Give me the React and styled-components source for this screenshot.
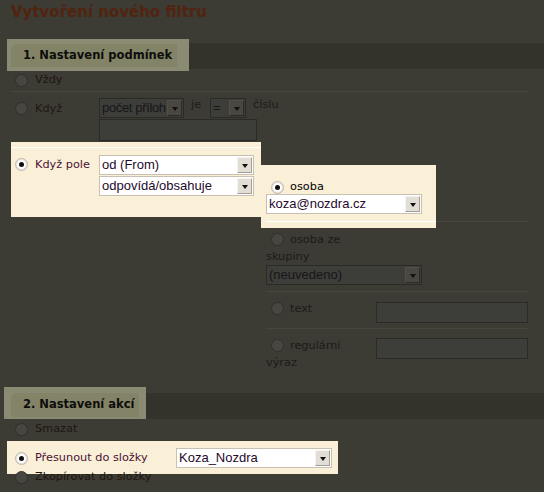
import React from 'react';
import styled, { createGlobalStyle, css } from 'styled-components';

const GlobalStyle = createGlobalStyle`
  html, body { margin: 0; padding: 0; }
  body { background: #3c3b34; overflow: hidden; }
  *, *::before, *::after { box-sizing: border-box; }
`;

const dimVars = css`
  --fg: #1c1b17;
  --label: #221511;
  --line: #47463d;
  --field-bg: #3d3d39;
  --field-border: #2b2a25;
  --field-fg: #18161a;
  --input-bg: #3d3e3a;
  --btn-bg: #4a4740;
  --btn-hi: #524f47;
  --btn-lo: #2c2b26;
  --radio-bg: #47463f;
  --radio-border: #31302a;
  --radio-shadow: none;
`;

const litVars = css`
  --fg: #000000;
  --label: #4b1036;
  --line: #ffffff;
  --field-bg: #ffffff;
  --field-border: #c8c0b2;
  --field-fg: #250a2c;
  --input-bg: #ffffff;
  --btn-bg: #e2ded6;
  --btn-hi: #f6f4f0;
  --btn-lo: #a29e96;
  --radio-bg: #ffffff;
  --radio-border: #bdb6ac;
  --radio-shadow: inset 0 0 0 1px #e6e1da;
`;

const halo = ({ $t = 0, $r = 0, $b = 0, $l = 0, $mt = 0, $mb = 0 }) => css`
  padding: ${$t}px ${$r}px ${$b}px ${$l}px;
  margin: ${$mt - $t}px ${-$r}px ${$mb - $b}px ${-$l}px;
`;

const Page = styled.div`
  ${dimVars}
  width: 544px;
  height: 492px;
  overflow: hidden;
  padding-left: 7px;
  background: #3c3b34;
  font-family: "DejaVu Sans", Verdana, sans-serif;
  font-size: 11.3px;
  line-height: 14px;
  color: var(--fg);
`;

const Spot = styled.div`
  ${litVars}
  background: #faf0d8;
  ${halo}
`;

const Title = styled.h1`
  margin: 0 0 0 4px;
  height: 43px;
  padding-top: 3px;
  font: bold 15px/18px "DejaVu Sans", Verdana, sans-serif;
  color: #52230f;
`;

const Band = styled.div`
  display: flex;
  align-items: flex-start;
  height: 26px;
  margin-top: ${p => p.$mt || 0}px;
  padding: ${p => p.$pt || 0}px 0 0 4px;
  background: #34332b;
`;

const TabHalo = styled.div`
  background: #8b8a73;
  ${halo}
`;

const Tab = styled.h2`
  margin: 0;
  height: ${p => p.$h}px;
  display: flex;
  align-items: center;
  padding: 0 5px 0 12px;
  background: #838367;
  clip-path: polygon(4px 0, 100% 0, 100% 100%, 0 100%, 0 4px);
  font: bold 11.5px/1 "DejaVu Sans", Verdana, sans-serif;
  color: #0d0d0a;
  white-space: nowrap;
`;

const Section = styled.div`
  margin-left: 4px;
  width: 518px;
`;

const OptionRow = styled.div`
  display: flex;
  align-items: ${p => p.$align || 'center'};
  height: ${p => (p.$h ? `${p.$h}px` : 'auto')};
  padding: ${p => p.$pt || 0}px 0 0 4px;
  ${p => p.$rule && css`border-bottom: 1px solid var(--line);`}
`;

const Radio = styled.span`
  flex: none;
  display: inline-block;
  position: relative;
  width: 13px;
  height: 13px;
  margin-top: ${p => p.$mt || 0}px;
  border-radius: 50%;
  border: 1px solid var(--radio-border);
  background: var(--radio-bg);
  box-shadow: var(--radio-shadow);
  ${p => p.$on && css`
    &::after {
      content: '';
      position: absolute;
      left: 3px;
      top: 3px;
      width: 5px;
      height: 5px;
      border-radius: 50%;
      background: #111;
    }
  `}
`;

const InlineRadio = styled(Radio)`
  vertical-align: middle;
  margin: -2px 6px 0 5px;
`;

const RowLabel = styled.span`
  flex: none;
  width: ${p => (p.$w ? `${p.$w}px` : 'auto')};
  margin: ${p => p.$mt || 0}px 0 0 7px;
  color: var(--label);
  white-space: nowrap;
`;

const Controls = styled.div`
  display: flex;
  flex-direction: column;
  gap: 1px;
`;

const ControlLine = styled.div`
  display: flex;
  align-items: flex-start;
`;

const Word = styled.span`
  margin: 0 ${p => p.$mr || 0}px 0 ${p => p.$ml || 0}px;
  color: var(--fg);
  white-space: nowrap;
`;

const SelectBox = styled.div`
  flex: none;
  display: flex;
  align-items: center;
  width: ${p => p.$w}px;
  height: 20px;
  padding: 1px 1px 1px 2px;
  border: 1px solid var(--field-border);
  background: var(--field-bg);
  color: var(--field-fg);
  font: 13px/16px "Liberation Sans", Arial, sans-serif;
  letter-spacing: ${p => (p.$tight ? '-0.35px' : 'normal')};
`;

const SelectValue = styled.span`
  flex: 1;
  min-width: 0;
  overflow: hidden;
  white-space: nowrap;
`;

const DropButton = styled.span`
  flex: none;
  width: 15px;
  height: 16px;
  display: flex;
  align-items: center;
  justify-content: center;
  background: var(--btn-bg);
  border: 1px solid;
  border-color: var(--btn-hi) var(--btn-lo) var(--btn-lo) var(--btn-hi);
  &::before {
    content: '';
    margin-top: 1px;
    border-style: solid;
    border-width: 4px 3.5px 0;
    border-color: #111 transparent transparent;
  }
`;

const Select = ({ w, tight, children }) => (
  <SelectBox $w={w} $tight={tight}>
    <SelectValue>{children}</SelectValue>
    <DropButton />
  </SelectBox>
);

const TextField = styled.input.attrs({ type: 'text', readOnly: true })`
  display: block;
  flex: none;
  width: ${p => p.$w}px;
  height: ${p => p.$h}px;
  margin: 0 0 0 ${p => p.$ml || 0}px;
  padding: 0;
  border: 1px solid var(--field-border);
  background: var(--input-bg);
  outline: none;
`;

const CondGrid = styled.div`
  display: grid;
  grid-template-columns: 250px 268px;
  align-items: start;
`;

const CondCell = styled.div`
  display: flex;
  align-items: flex-start;
  height: 65px;
  padding: 7px 0 0 4px;
  border-top: 1px solid var(--line);
`;

const Targets = styled.div`
  padding: 23px 0 0 5px;
`;

const TargetRow = styled.div`
  display: flex;
`;

const TargetCell = styled.div`
  width: 170px;
  padding: 10px 0 7px;
  border-bottom: 1px solid var(--line);
`;

const RuleFill = styled.div`
  flex: 1;
  border-bottom: 1px solid var(--line);
`;

const ChoiceLine = styled.div`
  display: flex;
  align-items: center;
  height: 14px;
  padding-left: 5px;
`;

const ChoiceName = styled.span`
  margin-left: 6px;
  color: var(--fg);
`;

const GroupRow = styled.div`
  padding: 9px 0 6px;
  border-bottom: 1px solid var(--line);
`;

const ChoiceText = styled.div`
  flex: none;
  width: 104px;
  margin-top: ${p => p.$mt || 0}px;
  line-height: 17px;
  color: var(--fg);
`;

const FieldRow = styled.div`
  display: flex;
  align-items: flex-start;
  padding: ${p => p.$pt || 0}px 0 ${p => p.$pb || 0}px;
  ${p => p.$rule && css`border-bottom: 1px solid var(--line);`}
`;

const ActionList = styled.div`
  display: flex;
  flex-direction: column;
  align-items: flex-start;
  margin-left: 4px;
  padding-top: 1px;
`;

export default function App() {
  return (
    <>
      <GlobalStyle />
      <Page>
        <Title>Vytvoření nového filtru</Title>

        <Band $pt={1}>
          <TabHalo $t={5} $r={12} $b={4} $l={4}>
            <Tab $h={23}>1. Nastavení podmínek</Tab>
          </TabHalo>
        </Band>

        <Section>
          <OptionRow $h={23} $rule>
            <Radio />
            <RowLabel>Vždy</RowLabel>
          </OptionRow>

          <OptionRow $h={55} $pt={6} $align="flex-start">
            <Radio $mt={4} />
            <RowLabel $w={64} $mt={4}>Když</RowLabel>
            <Controls>
              <ControlLine>
                <Select w={85} tight>počet příloh</Select>
                <Word $ml={7} $mr={9}>je</Word>
                <Select w={36}>=</Select>
                <Word $ml={7}>číslu</Word>
              </ControlLine>
              <TextField $w={158} $h={22} />
            </Controls>
          </OptionRow>

          <CondGrid>
            <Spot $t={5} $b={5}>
              <CondCell>
                <Radio $on $mt={3} />
                <RowLabel $w={64} $mt={3}>Když pole</RowLabel>
                <Controls>
                  <Select w={155}>od (From)</Select>
                  <Select w={155}>odpovídá/obsahuje</Select>
                </Controls>
              </CondCell>
            </Spot>

            <Targets>
              <TargetRow>
                <Spot $t={5} $b={6} $l={5}>
                  <TargetCell>
                    <ChoiceLine>
                      <Radio $on />
                      <ChoiceName>osoba</ChoiceName>
                    </ChoiceLine>
                    <Select w={156}>koza@nozdra.cz</Select>
                  </TargetCell>
                </Spot>
                <RuleFill />
              </TargetRow>

              <GroupRow>
                <ChoiceText>
                  <InlineRadio />osoba ze skupiny
                </ChoiceText>
                <Select w={156}>(neuvedeno)</Select>
              </GroupRow>

              <FieldRow $pt={10} $pb={5} $rule>
                <ChoiceText $mt={-2}>
                  <InlineRadio />text
                </ChoiceText>
                <TextField $w={152} $h={21} $ml={6} />
              </FieldRow>

              <FieldRow $pt={9}>
                <ChoiceText $mt={-1}>
                  <InlineRadio />regulární výraz
                </ChoiceText>
                <TextField $w={152} $h={21} $ml={6} />
              </FieldRow>
            </Targets>
          </CondGrid>
        </Section>

        <Band $mt={22}>
          <TabHalo $t={6} $r={7} $b={2} $l={7}>
            <Tab $h={24}>2. Nastavení akcí</Tab>
          </TabHalo>
        </Band>

        <ActionList>
          <OptionRow $h={18}>
            <Radio />
            <RowLabel>Smazat</RowLabel>
          </OptionRow>
          <Spot $t={7} $r={6} $b={6} $l={4} $mt={10}>
            <OptionRow $h={20}>
              <Radio $on />
              <RowLabel $w={141}>Přesunout do složky</RowLabel>
              <Select w={156}>Koza_Nozdra</Select>
            </OptionRow>
          </Spot>
          <OptionRow $h={18}>
            <Radio />
            <RowLabel>Zkopírovat do složky</RowLabel>
          </OptionRow>
        </ActionList>
      </Page>
    </>
  );
}
